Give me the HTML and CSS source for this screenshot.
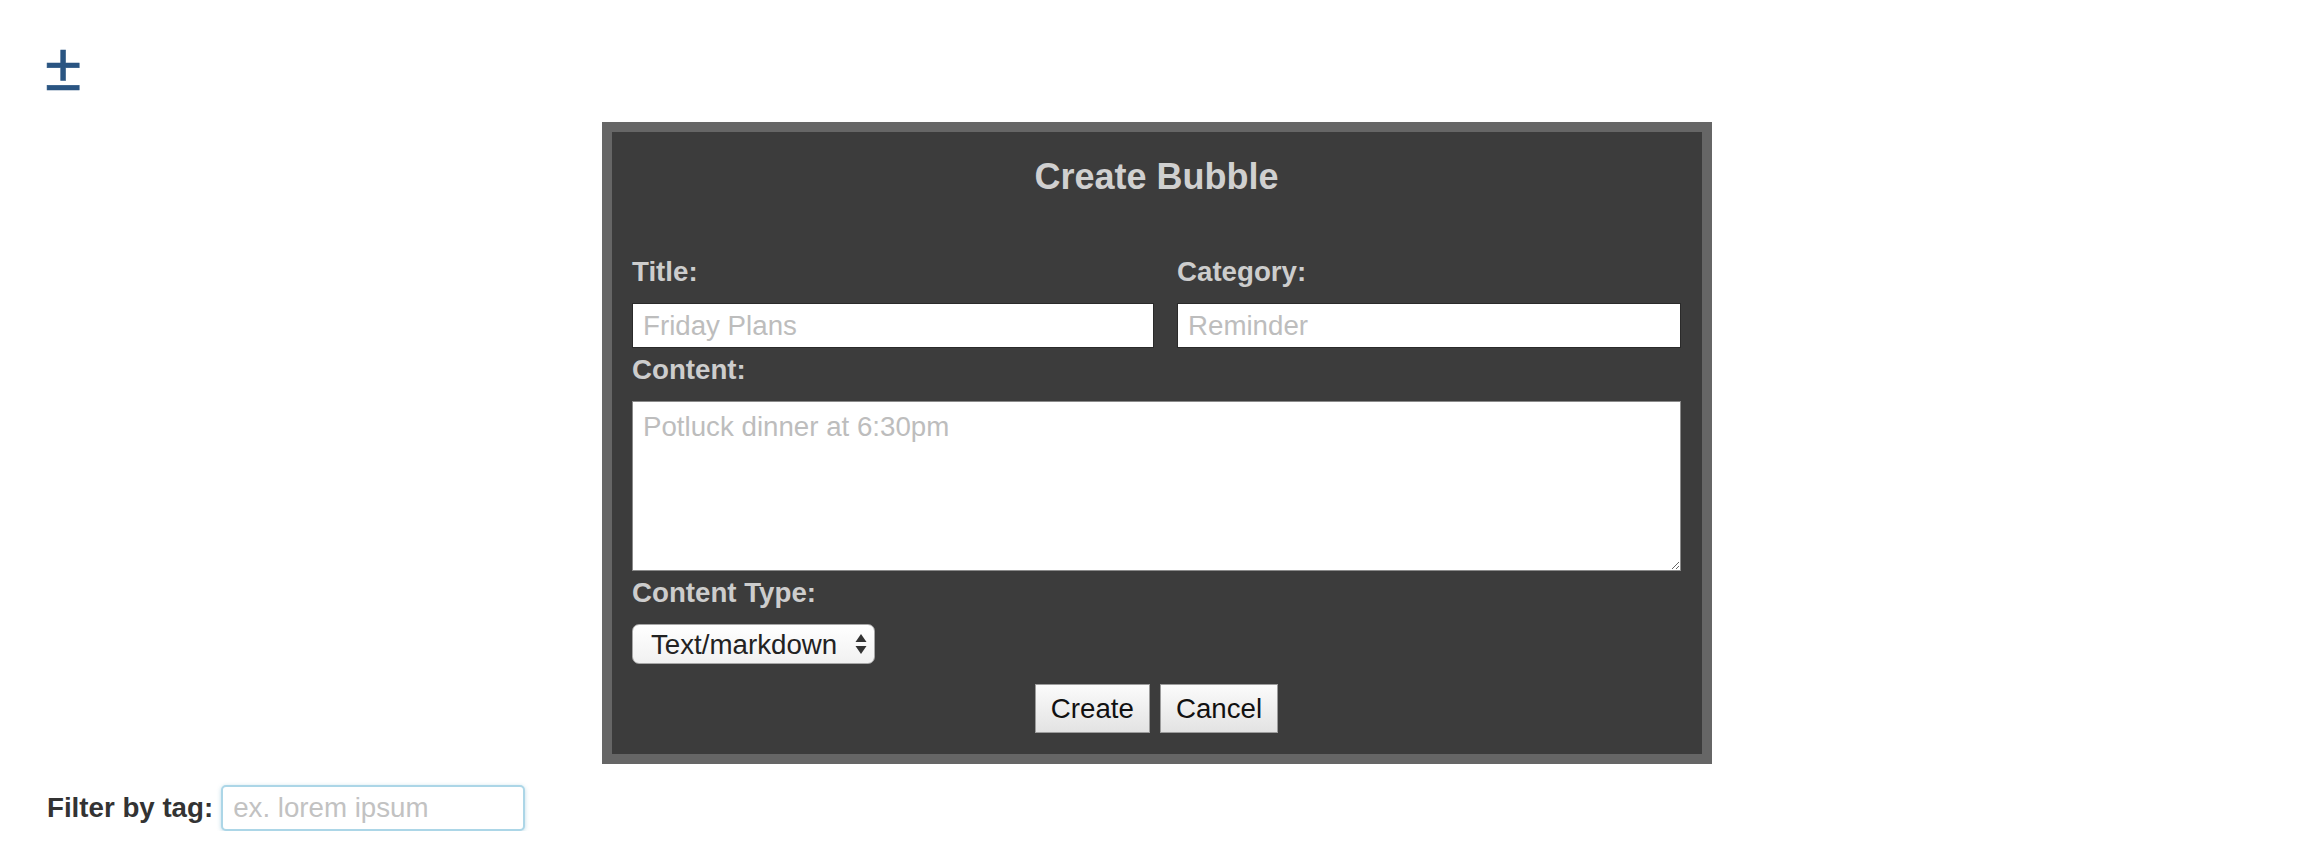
FILE: index.html
```html
<!DOCTYPE html>
<html lang="en">
<head>
<meta charset="utf-8">
<title>Create Bubble</title>
<link rel="stylesheet" href="styles.css">
</head>
<body>
<div class="toolbar">
  <a class="toggle" href="#">±</a>
</div>
<div class="modal">
  <h2 class="modal-title">Create Bubble</h2>
  <div class="row">
    <div class="field">
      <label class="label" for="title">Title:</label>
      <input class="text-input" id="title" type="text" placeholder="Friday Plans">
    </div>
    <div class="field">
      <label class="label" for="category">Category:</label>
      <input class="text-input" id="category" type="text" placeholder="Reminder">
    </div>
  </div>
  <div class="field gap">
    <label class="label" for="content">Content:</label>
    <textarea class="text-area" id="content" placeholder="Potluck dinner at 6:30pm"></textarea>
  </div>
  <div class="field gap">
    <label class="label" for="ctype">Content Type:</label>
    <div class="select-wrap">
      <select class="select" id="ctype">
        <option>Text/markdown</option>
      </select>
      <svg class="select-arrows" width="12" height="22" viewBox="0 0 12 22" aria-hidden="true">
        <polygon points="6,1 11.5,9 0.5,9" fill="#333"/>
        <polygon points="0.5,13 11.5,13 6,21" fill="#333"/>
      </svg>
    </div>
  </div>
  <div class="actions">
    <button class="btn" type="button">Create</button>
    <button class="btn" type="button">Cancel</button>
  </div>
</div>
<div class="filter">
  <label class="filter-label" for="tag">Filter by tag:</label>
  <input class="filter-input" id="tag" type="text" placeholder="ex. lorem ipsum">
</div>
</body>
</html>
```
FILE: styles.css
```css
html, body {
  margin: 0;
  padding: 0;
  background: #fff;
}
body {
  font-family: "Liberation Sans", Arial, Helvetica, sans-serif;
  font-size: 27.7px;
  color: #333;
}
.toolbar {
  height: 122px;
  box-sizing: border-box;
  padding: 32px 0 0 45px;
}
.toggle {
  display: inline-block;
  font-size: 66px;
  line-height: 70px;
  height: 70px;
  color: #2a5582;
  text-decoration: underline;
  text-decoration-thickness: 6px;
  text-underline-offset: -4px;
  -webkit-text-stroke: 0.6px #2a5582;
}
.modal {
  width: 1110px;
  box-sizing: border-box;
  margin: 0 auto;
  border: 10px solid #666;
  background: #3c3c3c;
  padding: 23px 21px 21px 20px;
  color: #cdcdcd;
}
.modal-title {
  margin: 0 0 57px;
  font-size: 36px;
  line-height: 44px;
  text-align: center;
  font-weight: bold;
  color: #d0d0d0;
}
.row {
  display: grid;
  grid-template-columns: 522px 1fr;
  column-gap: 23px;
}
.field {
  display: flex;
  flex-direction: column;
}
.field.gap {
  margin-top: 6px;
}
.label {
  font-size: 27.7px;
  font-weight: bold;
  line-height: 32px;
  margin-bottom: 15px;
  color: #cdcdcd;
}
.text-input {
  display: block;
  width: 100%;
  height: 45px;
  box-sizing: border-box;
  border: 1px solid #2a2a2a;
  background: #fff;
  padding: 0 10px;
  font-family: inherit;
  font-size: 27.7px;
  color: #222;
  outline: none;
}
.text-input::placeholder,
.text-area::placeholder {
  color: #bdbdbd;
}
.text-area {
  display: block;
  width: 100%;
  height: 170px;
  box-sizing: border-box;
  border: 1px solid #8a8a8a;
  background: #fff;
  padding: 9px 10px;
  font-family: inherit;
  font-size: 27.7px;
  line-height: 32px;
  color: #222;
  outline: none;
}
.select-wrap {
  position: relative;
  width: 243px;
}
.select {
  -webkit-appearance: none;
  appearance: none;
  width: 243px;
  height: 40px;
  box-sizing: border-box;
  border: 1px solid #a6a6a6;
  border-radius: 7px;
  background: linear-gradient(#ffffff, #f1f1f1);
  padding: 0 30px 0 18px;
  font-family: inherit;
  font-size: 27.7px;
  color: #222;
}
.select-arrows {
  position: absolute;
  right: 8px;
  top: 9px;
  pointer-events: none;
}
.actions {
  display: flex;
  justify-content: center;
  gap: 10px;
  margin-top: 20px;
}
.btn {
  height: 49px;
  padding: 0 15px;
  border: 1px solid #9c9c9c;
  border-radius: 0;
  background: linear-gradient(#fbfbfb, #e3e3e3);
  font-family: inherit;
  font-size: 27.7px;
  color: #111;
}
.filter {
  display: flex;
  align-items: center;
  gap: 8px;
  margin-top: 21px;
  padding-left: 47px;
}
.filter-label {
  font-weight: bold;
  font-size: 27.7px;
  color: #333;
}
.filter-input {
  width: 304px;
  height: 46px;
  box-sizing: border-box;
  border: 2px solid #acd6e7;
  border-radius: 5px;
  box-shadow: 0 1px 4px rgba(110, 175, 205, 0.45);
  padding: 0 10px;
  font-family: inherit;
  font-size: 27.7px;
  color: #222;
  outline: none;
}
.filter-input::placeholder {
  color: #c2c2c2;
}
```
